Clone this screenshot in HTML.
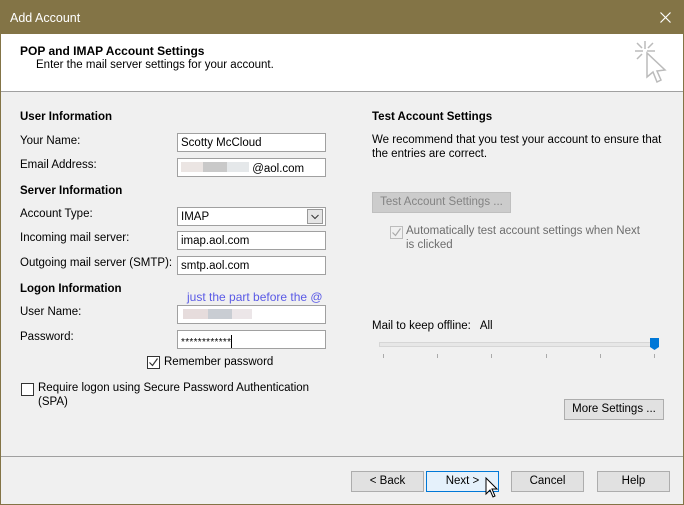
<html><head><style>
body{margin:0;width:684px;height:505px;overflow:hidden;font-family:"Liberation Sans",sans-serif;font-size:11.5px;color:#000}
.win{position:absolute;left:0;top:0;width:682px;height:503px;border:1px solid #837446;background:#f0f0f0}
.t{position:absolute;white-space:nowrap}
.inp{position:absolute;background:#fff;border:1px solid #a0a0a0;height:19px;box-sizing:border-box;padding:3px 0 0 3px;font-size:11.5px}
.btn{position:absolute;border:1px solid #adadad;background:#e1e1e1;height:21px;box-sizing:border-box;text-align:center;line-height:19px}
</style></head><body>
<div class="win">
<div style="position:absolute;left:0;top:0;width:682px;height:33px;background:#837446"></div>
<div class="t" style="left:9px;top:10px;color:#fff;font-size:12.5px">Add Account</div>
<svg style="position:absolute;left:659px;top:11px" width="11" height="11"><path d="M0.5 0.5l10 10M10.5 0.5l-10 10" stroke="#fff" stroke-width="1.2"/></svg>
<div style="position:absolute;left:0;top:33px;width:682px;height:57px;background:#fff;border-bottom:1px solid #a0a0a0"></div>
<div class="t" style="left:19px;top:43px;font-weight:bold;font-size:12px">POP and IMAP Account Settings</div>
<div class="t" style="left:35px;top:58px">Enter the mail server settings for your account.</div>
<svg style="position:absolute;left:632px;top:38px" width="36" height="50" viewBox="0 0 36 50"><g stroke="#bbb" stroke-width="1.5" fill="none"><path d="M12 2v8M2 12h8M14 12h8M4 4l5 5M20 4l-5 5M4 20l5-5"/><path d="M14 14v24l6-5 4 10 4-2-4-9 8-1z" fill="#fff"/></g></svg>

<div class="t" style="left:19px;top:110px;font-weight:bold">User Information</div>
<div class="t" style="left:19px;top:134px">Your Name:</div>
<div class="t" style="left:19px;top:158px">Email Address:</div>
<div class="t" style="left:19px;top:184px;font-weight:bold">Server Information</div>
<div class="t" style="left:19px;top:207px">Account Type:</div>
<div class="t" style="left:19px;top:231px">Incoming mail server:</div>
<div class="t" style="left:19px;top:256px">Outgoing mail server (SMTP):</div>
<div class="t" style="left:19px;top:282px;font-weight:bold">Logon Information</div>
<div class="t" style="left:186px;top:289px;color:#5a5ae6;font-size:12px">just the part before the @</div>
<div class="t" style="left:19px;top:305px">User Name:</div>
<div class="t" style="left:19px;top:330px">Password:</div>

<div class="inp" style="left:176px;top:132px;width:149px">Scotty McCloud</div>
<div class="inp" style="left:176px;top:157px;width:149px"><span style="display:inline-block;width:22px;height:10px;background:#ebe5e3"></span><span style="display:inline-block;width:24px;height:10px;background:#c9c9c9"></span><span style="display:inline-block;width:22px;height:10px;background:#e5e8ea"></span> @aol.com</div>
<div class="inp" style="left:176px;top:206px;width:149px">IMAP</div>
<div style="position:absolute;left:306px;top:208px;width:16px;height:15px;background:#e5e5e5;border:1px solid #999;box-sizing:border-box"><svg width="14" height="13" style="position:absolute;left:0;top:0"><path d="M3.5 5l3.5 3.5 3.5-3.5" stroke="#333" fill="none"/></svg></div>
<div class="inp" style="left:176px;top:230px;width:149px">imap.aol.com</div>
<div class="inp" style="left:176px;top:255px;width:149px">smtp.aol.com</div>
<div class="inp" style="left:176px;top:304px;width:149px"><span style="display:inline-block;width:25px;height:10px;background:#e6dcdc;margin-left:2px"></span><span style="display:inline-block;width:24px;height:10px;background:#c9cdd3"></span><span style="display:inline-block;width:20px;height:10px;background:#ece6e8"></span></div>
<div class="inp" style="left:176px;top:329px;width:149px;letter-spacing:0.3px;font-size:10px;padding-top:4px">************<span style="display:inline-block;width:1px;height:13px;background:#000;vertical-align:-3px"></span></div>

<div style="position:absolute;left:146px;top:355px;width:13px;height:13px;border:1px solid #333;background:#fff;box-sizing:border-box"><svg width="11" height="11" style="position:absolute;left:0;top:0"><path d="M1.5 5.5l3 3 5-7" stroke="#333" fill="none" stroke-width="1.2"/></svg></div>
<div class="t" style="left:163px;top:355px">Remember password</div>
<div style="position:absolute;left:20px;top:382px;width:13px;height:13px;border:1px solid #333;background:#fff;box-sizing:border-box"></div>
<div class="t" style="left:37px;top:381px">Require logon using Secure Password Authentication</div>
<div class="t" style="left:37px;top:395px">(SPA)</div>

<div class="t" style="left:371px;top:110px;font-weight:bold">Test Account Settings</div>
<div class="t" style="left:371px;top:133px">We recommend that you test your account to ensure that</div>
<div class="t" style="left:371px;top:147px">the entries are correct.</div>
<div class="btn" style="left:371px;top:191px;width:139px;color:#838383;background:#ccc;border-color:#bfbfbf">Test Account Settings ...</div>
<div style="position:absolute;left:389px;top:225px;width:13px;height:13px;border:1px solid #bcbcbc;box-sizing:border-box"><svg width="11" height="11" style="position:absolute;left:0;top:0"><path d="M1.5 5.5l3 3 5-7" stroke="#aaa" fill="none" stroke-width="1.2"/></svg></div>
<div class="t" style="left:405px;top:224px;color:#6d6d6d">Automatically test account settings when Next</div>
<div class="t" style="left:405px;top:238px;color:#6d6d6d">is clicked</div>
<div class="t" style="left:371px;top:319px">Mail to keep offline:&nbsp;&nbsp; All</div>
<div style="position:absolute;left:378px;top:341px;width:276px;height:3px;background:#e7e7e7;border:1px solid #d6d6d6"></div>
<div style="position:absolute;left:649px;top:337px;width:9px;height:12px;background:#0078d7;clip-path:polygon(0 0,100% 0,100% 75%,50% 100%,0 75%)"></div>
<svg style="position:absolute;left:378px;top:353px" width="280" height="5"><g stroke="#aaa"><path d="M4.5 0v4M58.5 0v4M112.5 0v4M167.5 0v4M221.5 0v4M275.5 0v4"/></g></svg>
<div class="btn" style="left:563px;top:398px;width:100px">More Settings ...</div>

<div style="position:absolute;left:0;top:455px;width:682px;height:1px;background:#a0a0a0"></div>
<div class="btn" style="left:350px;top:470px;width:73px">&lt; Back</div>
<div class="btn" style="left:425px;top:470px;width:73px;background:#e5f1fb;border-color:#0078d7">Next &gt;</div>
<div class="btn" style="left:510px;top:470px;width:73px">Cancel</div>
<div class="btn" style="left:596px;top:470px;width:73px">Help</div>
<svg style="position:absolute;left:484px;top:476px" width="14" height="22" viewBox="0 0 14 22"><path d="M1 1v16l4-4 3 7 2-1-3-7h5z" fill="#fff" stroke="#000"/></svg>
</div>
</body></html>
